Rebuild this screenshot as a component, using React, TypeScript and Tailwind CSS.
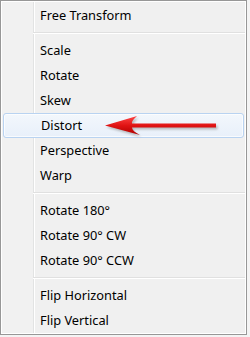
const groups: string[][] = [
  ["Free Transform"],
  ["Scale", "Rotate", "Skew", "Distort", "Perspective", "Warp"],
  ["Rotate 180°", "Rotate 90° CW", "Rotate 90° CCW"],
  ["Flip Horizontal", "Flip Vertical"],
];

function Separator() {
  return (
    <div className="flex h-[10px] flex-col pl-[31px] pt-[4px]">
      <div className="h-px bg-[#e0e0e0]" />
      <div className="h-px bg-white" />
    </div>
  );
}

function Item({ label, active }: { label: string; active?: boolean }) {
  if (active) {
    return (
      <div className="relative h-[25px] px-px">
        <div className="flex h-full items-center rounded-[3px] border border-[#b9d3f1] bg-[linear-gradient(to_bottom,#f3f7fc,#e8f0fa)] pl-[37px] pt-px shadow-[inset_0_0_0_1px_rgba(255,255,255,0.7)]">
          {label}
        </div>
      </div>
    );
  }
  return <div className="flex h-[25px] items-center pl-[38px] pt-px">{label}</div>;
}

const arrowPath =
  "M105 125.5 L137 116 Q131 121.5 132 123.5 L216 123.5 L216 127.5 L132 127.5 Q132 131 140 135 Z";

function Arrow() {
  return (
    <svg
      className="pointer-events-none absolute left-[100px] top-[110px]"
      width="125"
      height="30"
      viewBox="100 110 125 30"
    >
      <defs>
        <linearGradient id="red" x1="0" y1="0" x2="0" y2="1">
          <stop offset="0" stopColor="#ff4646" />
          <stop offset="0.5" stopColor="#e01414" />
          <stop offset="1" stopColor="#b00000" />
        </linearGradient>
        <filter id="blur" x="-10%" y="-50%" width="120%" height="200%">
          <feGaussianBlur stdDeviation="1.2" />
        </filter>
      </defs>
      <path d={arrowPath} fill="#8a8a8a" opacity="0.55" filter="url(#blur)" transform="translate(1.5 2)" />
      <path d={arrowPath} fill="url(#red)" />
    </svg>
  );
}

export default function App() {
  return (
    <div className="relative h-[337px] w-[250px] overflow-hidden bg-[#f4f4f4] font-['Noto_Sans',sans-serif] text-[12.8px] text-black">
      <div className="h-[335px] w-[247px] border border-[#979797] bg-white p-px">
        <div className="h-full bg-[linear-gradient(to_right,#f1f1f1_31px,#e2e3e3_31px,#e2e3e3_32px,#ffffff_32px,#ffffff_33px,#f0f0f0_33px)] pt-px">
          {groups.map((g, gi) => (
            <div key={gi}>
              {gi > 0 && <Separator />}
              {g.map((label) => (
                <Item key={label} label={label} active={label === "Distort"} />
              ))}
            </div>
          ))}
        </div>
      </div>
      <Arrow />
    </div>
  );
}
